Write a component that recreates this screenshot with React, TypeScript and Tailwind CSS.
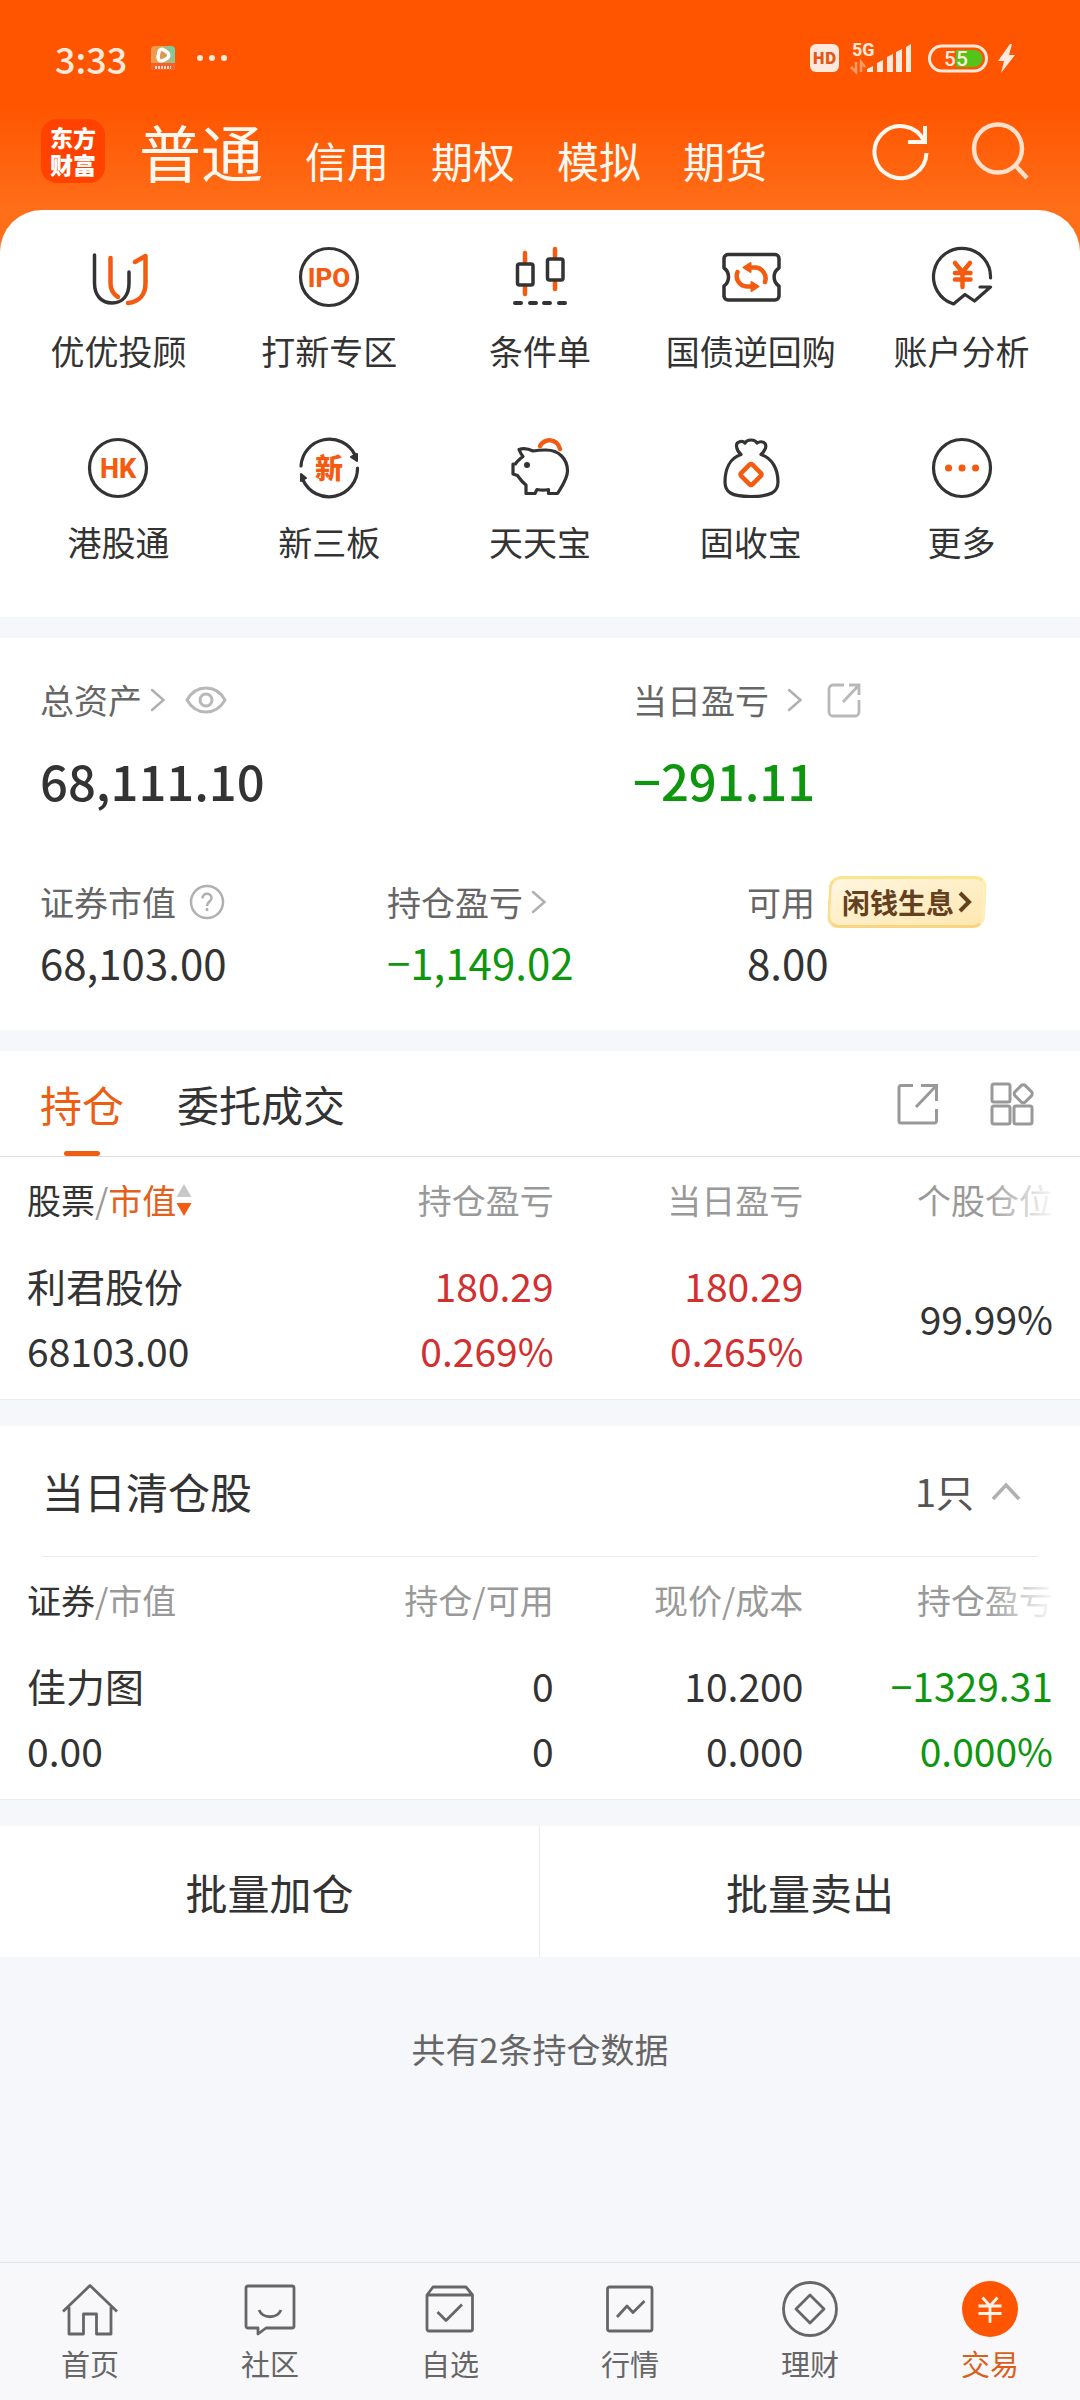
import { useState } from "react";
import type { ReactNode } from "react";

const ORANGE = "#f45b10";
const DARK = "#333333";

const ACCOUNT_TABS = ["普通", "信用", "期权", "模拟", "期货"];

const SHORTCUTS: { label: string; icon: ReactNode }[] = [
  {
    label: "优优投顾",
    icon: (
      <>
        <path d="M6.500 8V36C6.500 48 13 56 24 56S41 48 41 36V25" stroke={DARK} strokeWidth="3.500" />
        <path d="M22.500 11V36C22.500 43 25 47 30 50" stroke={ORANGE} strokeWidth="4.500" />
        <path d="M47 15L57.500 9V36C57.500 48 51 55 40 56" stroke={ORANGE} strokeWidth="4.500" />
      </>
    ),
  },
  {
    label: "打新专区",
    icon: (
      <>
        <circle cx="30" cy="30" r="28.500" stroke={DARK} strokeWidth="3.200" />
        <IconText size={26}>IPO</IconText>
      </>
    ),
  },
  {
    label: "条件单",
    icon: (
      <>
        <path d="M15 6V15M15 39V47M45 2V10M45 34V42" stroke={ORANGE} strokeWidth="4.500" />
        <rect x="7.500" y="17" width="15.500" height="21" rx="2" stroke={DARK} strokeWidth="3.500" />
        <rect x="37.500" y="12" width="15.500" height="21" rx="2" stroke={DARK} strokeWidth="3.500" />
        <path d="M5 56H11M20 56H26M34 56H40M49 56H55" stroke={DARK} strokeWidth="4" />
      </>
    ),
  },
  {
    label: "国债逆回购",
    icon: (
      <>
        <path
          d="M7 7.500H54A4 4 0 0 1 58 11.500V21C51.500 25 51.500 35 58 39V49A4 4 0 0 1 54 53H7A4 4 0 0 1 3 49V39C9 35 9 25 3 21V11.500A4 4 0 0 1 7 7.500Z"
          stroke={DARK}
          strokeWidth="3.500"
        />
        <path d="M28 20.500H34A11 11 0 0 1 44 35M16.500 25A10.500 10.500 0 0 0 26 39.500H33" stroke={ORANGE} strokeWidth="4.500" />
        <path d="M22.500 20.500L29.500 16V25ZM37.500 39.500L30.500 35V44Z" fill={ORANGE} stroke={ORANGE} strokeWidth="2" />
      </>
    ),
  },
  {
    label: "账户分析",
    icon: (
      <>
        <path d="M58.500 31A28.500 28.500 0 1 0 21.500 57L33 47.500L42.500 54L58.500 40H48" stroke={DARK} strokeWidth="3.200" />
        <path d="M23 16L30.500 25L38 16M30.500 25V40M23 26H38.500M23 32.500H38.500" stroke={ORANGE} strokeWidth="4.500" />
      </>
    ),
  },
  {
    label: "港股通",
    icon: (
      <>
        <circle cx="30" cy="30" r="28.500" stroke={DARK} strokeWidth="3.200" />
        <IconText size={27}>HK</IconText>
      </>
    ),
  },
  {
    label: "新三板",
    icon: (
      <>
        <path d="M2 28A28.500 28.500 0 0 1 56 17M58.500 30A28.500 28.500 0 0 1 4 42" stroke={DARK} strokeWidth="3.200" />
        <path d="M52 19L58 16V23ZM2 43L2 36L7 40Z" fill={DARK} stroke={DARK} strokeWidth="2" />
        <IconText size={28}>新</IconText>
      </>
    ),
  },
  {
    label: "天天宝",
    icon: (
      <>
        <path
          d="M9 11.500C13 10 19 11 23 13C28 12 32 12 36 12C49 12 57.500 21 57.500 33C57.500 41 52 48 47.500 55.500H38.500V51.500C34 52.500 30 52 27 51.500L25 55.500H16V47C12 44 10 41 7.500 37.500L3 36V26H5.500C7 23 10 21 13 18.500C11 16 10 14 9 11.500Z"
          stroke={DARK}
          strokeWidth="3.200"
        />
        <circle cx="17" cy="27" r="3" fill={DARK} />
        <path d="M30 8C35 0 47 0 50 11" stroke={ORANGE} strokeWidth="4.500" />
      </>
    ),
  },
  {
    label: "固收宝",
    icon: (
      <>
        <path
          d="M20 16.500C15 12 14 5 18 4C20.500 3 23 4 24 5C26 1 34 1 36 5C38 3.500 42 3 44 5.500C46 8 44 13 40 16.500C51 20 57 31 57 44C57 54 50 58.500 30 58.500S4 54 4 44C4 31 9 20 20 16.500Z"
          stroke={DARK}
          strokeWidth="3.200"
        />
        <rect x="22" y="28.500" width="16" height="16" rx="2" transform="rotate(45 30 36.500)" stroke={ORANGE} strokeWidth="4.500" />
      </>
    ),
  },
  {
    label: "更多",
    icon: (
      <>
        <circle cx="30" cy="30" r="28.500" stroke={DARK} strokeWidth="3.200" />
        <path d="M16.500 30H16.600M30 30H30.100M43.500 30H43.600" stroke={ORANGE} strokeWidth="7" />
      </>
    ),
  },
];

const NAV_ITEMS: { label: string; icon: ReactNode }[] = [
  {
    label: "首页",
    icon: <path d="M3 32.500L30 6.500L57 32.500M9 28V55H23.500V35H36.500V55H51V28" />,
  },
  {
    label: "社区",
    icon: (
      <>
        <path d="M8 7H52A2 2 0 0 1 54 9V47A2 2 0 0 1 52 49H26L18 55V49H8A2 2 0 0 1 6 47V9A2 2 0 0 1 8 7Z" />
        <path d="M19 31C23 40 37 40 41 31" />
      </>
    ),
  },
  {
    label: "自选",
    icon: (
      <>
        <path d="M7 16L13 8H46L52.500 16V50A2 2 0 0 1 50.500 52H9A2 2 0 0 1 7 50ZM7 16H52.500" />
        <path d="M17.500 33L26 41.500L42 25.500" />
      </>
    ),
  },
  {
    label: "行情",
    icon: (
      <>
        <rect x="7.500" y="8" width="44.500" height="44" rx="2" />
        <path d="M17 38L27 27L33 33.500L44.500 22" />
      </>
    ),
  },
  {
    label: "理财",
    icon: (
      <>
        <circle cx="30" cy="30" r="26.500" />
        <path d="M30 16L44 30L30 44L16 30Z" />
      </>
    ),
  },
  {
    label: "交易",
    icon: (
      <>
        <circle cx="30" cy="30" r="28" fill="#ff5500" stroke="none" />
        <path d="M22.500 18.500L30 27L37.500 18.500M30 27V44M18.500 27H41.500M18.500 34.500H41.500" stroke="#fff3ea" />
      </>
    ),
  },
];

type Column = { head: ReactNode; lines: string[]; tone?: string };

const HOLDINGS: Column[] = [
  { head: null, lines: ["利君股份", "68103.00"] },
  { head: "持仓盈亏", lines: ["180.29", "0.269%"], tone: "text-[#d2302f]" },
  { head: "当日盈亏", lines: ["180.29", "0.265%"], tone: "text-[#d2302f]" },
  { head: "个股仓位", lines: ["99.99%"] },
];

const CLEARED: Column[] = [
  { head: null, lines: ["佳力图", "0.00"] },
  { head: "持仓/可用", lines: ["0", "0"] },
  { head: "现价/成本", lines: ["10.200", "0.000"] },
  { head: "持仓盈亏", lines: ["−1329.31", "0.000%"], tone: "text-[#0f960f]" },
];

function IconText({ size, children }: { size: number; children: ReactNode }) {
  return (
    <text
      x="30"
      y="31"
      fontSize={size}
      fontWeight="800"
      fill={ORANGE}
      textAnchor="middle"
      dominantBaseline="central"
      className="font-['Roboto','Noto_Sans_CJK_SC',sans-serif]"
    >
      {children}
    </text>
  );
}

function Chevron() {
  return (
    <svg viewBox="0 0 16 24" className="h-6 w-4" fill="none" stroke="#b0b0b0" strokeWidth="2.500" strokeLinecap="round">
      <path d="M2 2L13.500 12L2 22" />
    </svg>
  );
}

function StatusBar() {
  return (
    <div className="flex h-[116px] items-center justify-between pr-16 pl-[55px] text-[#ffe9dc]">
      <div className="flex items-center">
        <span className="text-[36px] leading-10 font-medium">3:33</span>
        <svg viewBox="0 0 24 24" className="ml-6 size-6">
          <defs>
            <linearGradient id="app" x1="0" y1="0.300" x2="1" y2="0">
              <stop offset="0.300" stopColor="#f09a4d" />
              <stop offset="1" stopColor="#5fd8b8" />
            </linearGradient>
          </defs>
          <rect width="24" height="24" rx="4" fill="url(#app)" />
          <path d="M0 17H24V20A4 4 0 0 1 20 24H4A4 4 0 0 1 0 20Z" fill="#f4622a" />
          <path d="M8 5.500C8.500 3 11 3 13 4L16.500 6.500C18.500 8.500 18.500 10.500 16 12.500L12 14.500C9 16 7 14 7 11Z" fill="#d99a55" stroke="#fff" strokeWidth="3.500" />
          <path d="M4 21.500H20" stroke="#ffd9c4" strokeWidth="3" strokeDasharray="2 1" />
        </svg>
        <svg viewBox="0 0 32 8" className="ml-[21px] h-2 w-8" fill="currentColor">
          <circle cx="4" cy="4" r="3" />
          <circle cx="16" cy="4" r="3" />
          <circle cx="28" cy="4" r="3" />
        </svg>
      </div>
      <svg viewBox="0 0 206 44" className="h-11 w-[206px] overflow-visible" fill="currentColor">
        <rect x="0" y="8" width="29" height="28" rx="6" />
        <text x="14.500" y="28" fontSize="16" fontWeight="900" fill="#e2571a" textAnchor="middle">HD</text>
        <text x="42" y="20" fontSize="18" fontWeight="700" className="font-['Roboto',sans-serif]">5G</text>
        <path d="M46 26V36L41 31M51 36V26L55 31" fill="none" stroke="#ff9c69" strokeWidth="2.500" />
        <path d="M57 36V33L63 30V36ZM67 36V27L73 24V36ZM77 36V21L83 18V36ZM86 36V16L92 13V36ZM96 36V11L101 8V36Z" />
        <rect x="119.500" y="10" width="57" height="25" rx="12.500" fill="none" stroke="currentColor" strokeWidth="3" />
        <path d="M146 14H164A8.500 8.500 0 0 1 164 31H146Z" fill="#52c41a" />
        <text x="146" y="30" fontSize="21" fontWeight="500" textAnchor="middle" className="font-['Roboto',sans-serif]">55</text>
        <path d="M200 8L188 25H194L191 37L205 19H199L202 8Z" />
      </svg>
    </div>
  );
}

function PositionTable({ first, columns }: { first: ReactNode; columns: Column[] }) {
  return (
    <div className="border-b border-[#ececec] px-[27px]">
      <table className="w-full table-fixed text-right">
        <thead>
          <tr className="h-[86px] text-[34px] leading-[44px] text-[#999]">
            <th scope="col" className="w-[27%] text-left font-normal whitespace-nowrap">{first}</th>
            {columns.slice(1).map((col, i) => (
              <th key={i} scope="col" className="relative font-normal whitespace-nowrap">
                {col.head}
                {i === 2 && (
                  <span className="pointer-events-none absolute inset-y-0 right-0 w-[68px] bg-linear-to-r from-white/0 to-white/95" />
                )}
              </th>
            ))}
          </tr>
        </thead>
        <tbody>
          <tr className="text-[39px] leading-[65px]">
            {columns.map((col, i) => (
              <td key={i} className={`pt-[10px] pb-4 whitespace-nowrap ${i === 0 ? "text-left" : ""} ${col.tone ?? ""}`}>
                {col.lines.map((line, n) => (
                  <div key={n}>{line}</div>
                ))}
              </td>
            ))}
          </tr>
        </tbody>
      </table>
    </div>
  );
}

export default function App() {
  const [account, setAccount] = useState("普通");
  const [showCleared, setShowCleared] = useState(true);

  return (
    <div className="flex min-h-screen flex-col bg-[#f6f7fa] font-['Noto_Sans_CJK_SC',sans-serif] text-[#333]">
      <div className="bg-[linear-gradient(#ff5500_105px,#ff6e19_210px)]">
        <StatusBar />

        {/* Account switcher */}
        <header className="flex h-[94px] items-start justify-between pr-[50px] pl-[41px] text-[#fff8f0]">
          <div className="flex h-[70px] items-center">
            <div className="flex size-16 items-center justify-center rounded-2xl bg-[#ff4200]">
              <span className="w-[46px] text-[23px] leading-[27px] font-black break-all text-white">东方财富</span>
            </div>
            <nav className="ml-[34px] flex items-baseline gap-[42px] pt-2 whitespace-nowrap">
              {ACCOUNT_TABS.map((tab) => (
                <button
                  key={tab}
                  onClick={() => setAccount(tab)}
                  className={tab === account ? "text-[62px] leading-[70px]" : "text-[42px] leading-[70px]"}
                >
                  {tab}
                </button>
              ))}
            </nav>
          </div>
          <div className="flex h-[72px] items-center gap-[38px]">
            <button aria-label="刷新">
              <svg viewBox="0 0 60 60" className="size-[60px]" fill="none" stroke="currentColor" strokeWidth="4">
                <path d="M54.500 31A26 26 0 1 1 52 19M53 4V20H36" />
              </svg>
            </button>
            <button aria-label="搜索">
              <svg viewBox="0 0 60 60" className="size-[60px]" fill="none" stroke="#ffe0cc" strokeWidth="4.500">
                <circle cx="28" cy="26.500" r="24" />
                <path d="M45 43L57 56" />
              </svg>
            </button>
          </div>
        </header>

        {/* Shortcuts */}
        <section className="grid grid-cols-5 gap-y-[65px] rounded-t-[42px] bg-white px-[13px] pt-[37px] pb-[53px]">
          {SHORTCUTS.map((item) => (
            <button key={item.label} className="flex flex-col items-center gap-[22px] text-[34px] leading-[44px] whitespace-nowrap">
              <svg viewBox="0 0 60 60" className="size-[60px] overflow-visible" fill="none" strokeLinecap="round" strokeLinejoin="round">
                {item.icon}
              </svg>
              <span>{item.label}</span>
            </button>
          ))}
        </section>
      </div>

      {/* Assets */}
      <section className="mt-[21px] bg-white px-10 pt-10 pb-[38px]">
        <div className="grid grid-cols-[593fr_407fr]">
          <div>
            <div className="flex h-[44px] items-center text-[34px] leading-[44px] text-[#666]">
              总资产
              <span className="ml-2"><Chevron /></span>
              <button aria-label="显示资产" className="ml-[19px]">
                <svg viewBox="0 0 42 32" className="h-8 w-[42px]" fill="none" stroke="#b8b8b8" strokeWidth="3">
                  <path d="M2 16C11 0 31 0 40 16C31 32 11 32 2 16Z" />
                  <circle cx="21" cy="16" r="6" />
                </svg>
              </button>
            </div>
            <div className="mt-[22px] text-[49px] leading-[72px] font-medium">68,111.10</div>
          </div>
          <div>
            <div className="flex h-[44px] items-center text-[34px] leading-[44px] text-[#666]">
              当日盈亏
              <span className="ml-[18px]"><Chevron /></span>
              <button aria-label="分享盈亏" className="ml-[23px]">
                <svg viewBox="0 0 36 36" className="size-9" fill="none" stroke="#b8b8b8" strokeWidth="2.800">
                  <path d="M18 3H7A4 4 0 0 0 3 7V30A4 4 0 0 0 7 34H29A4 4 0 0 0 33 30V18M23 3H33V13M33 3L17 20" />
                </svg>
              </button>
            </div>
            <div className="mt-[22px] text-[49px] leading-[72px] font-medium text-[#0f960f]">−291.11</div>
          </div>
        </div>
        <div className="mt-[64px] grid grid-cols-[347fr_360fr_293fr] text-[42px] leading-[60px] whitespace-nowrap">
          <div>
            <div className="flex h-[44px] items-center text-[34px] leading-[44px] text-[#666]">
              证券市值
              <svg viewBox="0 0 36 36" className="ml-[13px] size-9" fill="none" stroke="#b0b0b0" strokeWidth="2.500">
                <circle cx="18" cy="18" r="16" />
                <path d="M13.500 14.500C13.500 8 22.500 8.500 22.500 14C22.500 17.500 18 17.500 18 22M18 24V27" />
              </svg>
            </div>
            <div className="mt-2">68,103.00</div>
          </div>
          <div>
            <div className="flex h-[44px] items-center text-[34px] leading-[44px] text-[#666]">
              持仓盈亏
              <span className="ml-2"><Chevron /></span>
            </div>
            <div className="mt-2 text-[#0f960f]">−1,149.02</div>
          </div>
          <div>
            <div className="flex h-[44px] items-center text-[34px] leading-[44px] text-[#666]">
              可用
              <button className="relative ml-[13px] flex h-[52px] items-center gap-1 px-[14px] text-[28px] font-bold text-[#65401f]">
                <span className="absolute inset-0 -skew-x-3 rounded-xl border-3 border-t-[#fae58d] border-r-[#fdeeb4] border-b-[#f9d57f] border-l-[#f9df92] bg-linear-to-br from-[#fff6df] to-[#fee7b0]" />
                <span className="relative">闲钱生息</span>
                <svg viewBox="0 0 14 22" className="relative h-[22px] w-[14px]" fill="none" stroke="currentColor" strokeWidth="4">
                  <path d="M2 2L11 11L2 20" />
                </svg>
              </button>
            </div>
            <div className="mt-2">8.00</div>
          </div>
        </div>
      </section>

      {/* Holdings */}
      <section className="mt-[21px] bg-white">
        <div className="flex h-[106px] items-stretch justify-between border-b border-[#dedede] pr-[46px] pl-[40px]">
          <div className="flex gap-[53px] text-[42px] leading-[105px]">
            <button className="relative text-[#ee5d12]">
              持仓
              <span className="absolute bottom-0 left-1/2 h-[5px] w-9 -translate-x-1/2 rounded-full bg-[#ee5d12]" />
            </button>
            <button>委托成交</button>
          </div>
          <div className="flex items-center gap-[50px] text-[#999]">
            <button aria-label="分享">
              <svg viewBox="0 0 44 44" className="size-[44px]" fill="none" stroke="currentColor" strokeWidth="3">
                <path d="M17 3.500H5A2 2 0 0 0 3 5.500V39A2 2 0 0 0 5 41H38A2 2 0 0 0 40.500 39V27M25 3.500H40.500V19M40 4L20 25" />
              </svg>
            </button>
            <button aria-label="更多功能">
              <svg viewBox="0 0 44 44" className="size-[44px]" fill="none" stroke="currentColor" strokeWidth="3">
                <rect x="2" y="2" width="18" height="18" rx="2" />
                <rect x="2" y="24" width="18" height="18" rx="2" />
                <rect x="24" y="24" width="18" height="18" rx="2" />
                <rect x="26" y="4.500" width="14.500" height="14.500" rx="3" transform="rotate(45 33.250 11.750)" />
              </svg>
            </button>
          </div>
        </div>
        <PositionTable
          first={
            <button className="flex items-center">
              <span className="text-[#333]">股票</span>/<span className="text-[#e2611c]">市值</span>
              <svg viewBox="0 0 16 32" className="h-8 w-4">
                <path d="M8 0L15.500 13H0.500Z" fill="#c8c8c8" />
                <path d="M8 32L15.500 19H0.500Z" fill="#f45b10" />
              </svg>
            </button>
          }
          columns={HOLDINGS}
        />
      </section>

      {/* Positions closed today */}
      <section className="mt-[26px] bg-white">
        <div className="mx-[42px] flex h-[131px] items-center justify-between border-b border-[#ececec]">
          <h2 className="text-[42px] leading-[60px]">当日清仓股</h2>
          <button
            aria-expanded={showCleared}
            onClick={() => setShowCleared(!showCleared)}
            className="flex items-center gap-4 pr-4 text-[38px] leading-[60px] text-[#555]"
          >
            1只
            <svg viewBox="0 0 32 20" className="h-5 w-8" fill="none" stroke="#b0b0b0" strokeWidth="3.500">
              <path d="M3 18L16 4L29 18" />
            </svg>
          </button>
        </div>
        {showCleared && (
          <PositionTable
            first={
              <>
                <span className="text-[#333]">证券</span>/市值
              </>
            }
            columns={CLEARED}
          />
        )}
      </section>

      <div className="mt-[26px] grid grid-cols-2 divide-x divide-[#ececec] bg-white text-[42px] leading-[131px]">
        <button>批量加仓</button>
        <button>批量卖出</button>
      </div>

      <p className="mt-[70px] text-center text-[34px] leading-[44px] text-[#666]">共有2条持仓数据</p>

      <nav className="mt-auto grid grid-cols-6 border-t border-[#e2e2e4] bg-[#f8f8fb] pt-4 pb-[17px]">
        {NAV_ITEMS.map((item) => (
          <a
            key={item.label}
            href="#"
            className={`flex flex-col items-center gap-1 text-[29px] leading-10 ${
              item.label === "交易" ? "text-[#d9601c]" : "text-[#666]"
            }`}
          >
            <svg viewBox="0 0 60 60" className="size-[60px]" fill="none" stroke="currentColor" strokeWidth="2.800" strokeLinejoin="round">
              {item.icon}
            </svg>
            <span>{item.label}</span>
          </a>
        ))}
      </nav>
    </div>
  );
}
